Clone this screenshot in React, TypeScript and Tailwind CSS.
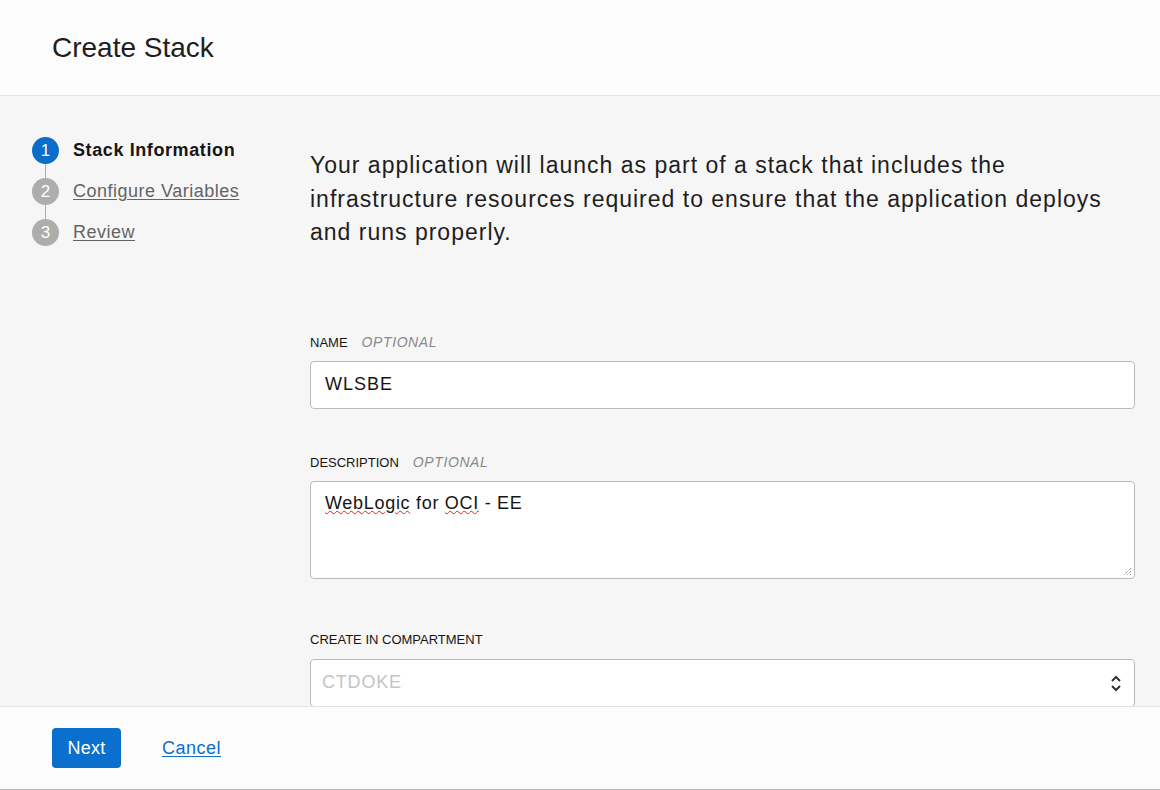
import React from 'react';

const steps = [
  { n: 1, label: 'Stack Information', active: true },
  { n: 2, label: 'Configure Variables', active: false },
  { n: 3, label: 'Review', active: false },
];

function Stepper() {
  return (
    <div className="relative flex flex-col gap-[14px]">
      <div className="absolute left-[13px] top-[14px] h-[82px] w-px bg-[#aaaaaa]" />
      {steps.map((s) => (
        <div key={s.n} className="relative flex items-center gap-[14px]">
          <div
            className={
              s.active
                ? 'flex h-[27px] w-[27px] items-center justify-center rounded-full bg-[#0a6dc9] text-[17px] text-white'
                : 'flex h-[27px] w-[27px] items-center justify-center rounded-full bg-[#adadad] text-[17px] text-white'
            }
          >
            {s.n}
          </div>
          {s.active ? (
            <span className="text-[18px] font-bold tracking-[0.6px] text-[#161513]">{s.label}</span>
          ) : (
            <a href="#" className="text-[18px] tracking-[0.5px] text-[#646464] underline underline-offset-2">
              {s.label}
            </a>
          )}
        </div>
      ))}
    </div>
  );
}

function Label({ text, optional }: { text: string; optional?: boolean }) {
  return (
    <div className="mb-[11px] flex h-[16px] items-baseline gap-[14px] text-[13px] leading-[16px] text-[#161513]">
      <span>{text}</span>
      {optional && <span className="text-[14px] italic tracking-[0.6px] text-[#8a8a8a]">OPTIONAL</span>}
    </div>
  );
}

export default function App() {
  return (
    <div
      className="flex h-[790px] w-[1160px] flex-col overflow-hidden bg-white text-[#161513]"
      style={{ fontFamily: '"Liberation Sans", Arial, sans-serif' }}
    >
      <header className="flex h-[96px] shrink-0 items-center border-b border-[#e4e4e4] bg-[#fcfcfc] px-[52px]">
        <h1 className="text-[28px] font-normal text-[#1e1e1e]">Create Stack</h1>
      </header>

      <main className="flex min-h-0 flex-1 overflow-hidden bg-[#f6f6f6]">
        <aside className="w-[310px] shrink-0 pl-[32px] pt-[41px]">
          <Stepper />
        </aside>

        <section className="w-[825px] shrink-0 pt-[53px]">
          <p className="text-[23px] leading-[33.5px] tracking-[1px] text-[#1e1e1e]">
            Your application will launch as part of a stack that includes the infrastructure resources required to
            ensure that the application deploys and runs properly.
          </p>

          <div className="mt-[84px]">
            <Label text="NAME" optional />
            <div className="flex h-[48px] items-center rounded-[4px] border border-[#b8bcc1] bg-white px-[14px] text-[18px] tracking-[1px] text-[#161513]">
              WLSBE
            </div>
          </div>

          <div className="mt-[45px]">
            <Label text="DESCRIPTION" optional />
            <div className="relative h-[98px] rounded-[4px] border border-[#b8bcc1] bg-white px-[14px] pt-[8px] text-[18px] tracking-[0.7px] text-[#161513]">
              <span>
                <span className="underline decoration-[#e02020] decoration-wavy decoration-1">WebLogic</span> for{' '}
                <span className="underline decoration-[#e02020] decoration-wavy decoration-1">OCI</span> - EE
              </span>
              <svg className="absolute bottom-[2px] right-[2px]" width="10" height="10" viewBox="0 0 10 10">
                <path d="M9 2 L2 9 M9 5 L5 9 M9 8 L8 9" stroke="#6b6b6b" strokeWidth="1" strokeDasharray="1 1" />
              </svg>
            </div>
          </div>

          <div className="mt-[53px]">
            <Label text="CREATE IN COMPARTMENT" />
            <div className="flex h-[48px] items-center justify-between rounded-[4px] border border-[#b8bcc1] bg-white pl-[11px] pr-[12px] text-[18px] tracking-[0.8px]">
              <span className="text-[#c4c4c4]">CTDOKE</span>
              <svg width="12" height="24" viewBox="0 0 12 24" fill="none" stroke="#333" strokeWidth="2">
                <path d="M2 10 L6 6 L10 10" />
                <path d="M2 15 L6 19 L10 15" />
              </svg>
            </div>
          </div>
        </section>
      </main>

      <footer className="flex h-[84px] shrink-0 items-center gap-[41px] border-y border-t-[#e4e4e4] border-b-[#b8bcc1] bg-[#fcfcfc] px-[52px]">
        <button className="h-[40px] w-[69px] rounded-[4px] bg-[#0a6fcd] text-[18px] tracking-[0.3px] text-white">
          Next
        </button>
        <a href="#" className="text-[18px] tracking-[0.5px] text-[#0a6fcd] underline underline-offset-2">
          Cancel
        </a>
      </footer>
    </div>
  );
}
